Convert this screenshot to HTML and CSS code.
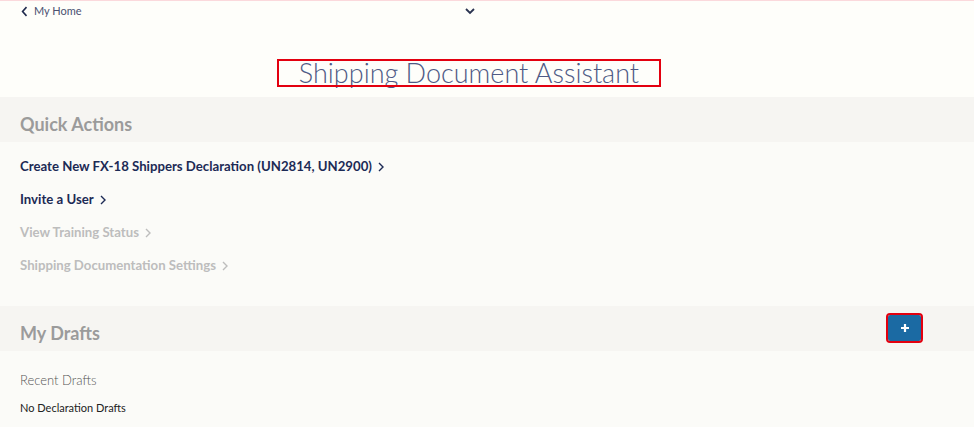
FILE: index.html
```html
<!DOCTYPE html>
<html lang="en">
<head>
<meta charset="utf-8">
<title>Shipping Document Assistant</title>
<link rel="stylesheet" href="styles.css">
</head>
<body>
<div class="page">
<header class="topbar">
  <a class="back" href="#">
    <svg class="back-icon" viewBox="0 0 8 12" width="7" height="11"><path d="M6.3 1 L1.8 6 L6.3 11" fill="none" stroke="#1f2a4d" stroke-width="1.8"/></svg>
    <span>My Home</span>
  </a>
  <div class="toggle">
    <svg viewBox="0 0 10 7" width="10" height="7"><path d="M1 1 L5 5 L9 1" fill="none" stroke="#2a3350" stroke-width="1.8"/></svg>
  </div>
</header>

<div class="title-wrap">
  <h1 class="title">Shipping Document Assistant</h1>
</div>

<section class="panel">
  <div class="band"><h2>Quick Actions</h2></div>
  <ul class="actions">
    <li><a class="action" href="#">Create New FX-18 Shippers Declaration (UN2814, UN2900)<svg class="chev" viewBox="0 0 6 10" width="6" height="10"><path d="M1 1 L5 5 L1 9" fill="none" stroke="currentColor" stroke-width="1.4"/></svg></a></li>
    <li><a class="action" href="#">Invite a User<svg class="chev" viewBox="0 0 6 10" width="6" height="10"><path d="M1 1 L5 5 L1 9" fill="none" stroke="currentColor" stroke-width="1.4"/></svg></a></li>
    <li><a class="action disabled" href="#">View Training Status<svg class="chev" viewBox="0 0 6 10" width="6" height="10"><path d="M1 1 L5 5 L1 9" fill="none" stroke="currentColor" stroke-width="1.4"/></svg></a></li>
    <li><a class="action disabled" href="#">Shipping Documentation Settings<svg class="chev" viewBox="0 0 6 10" width="6" height="10"><path d="M1 1 L5 5 L1 9" fill="none" stroke="currentColor" stroke-width="1.4"/></svg></a></li>
  </ul>
</section>

<section class="panel drafts">
  <div class="band band-row">
    <h2>My Drafts</h2>
    <button class="add-btn" type="button" aria-label="Add draft">
      <svg viewBox="0 0 10 10" width="10" height="10"><path d="M5 1 V9 M1 5 H9" stroke="#fff" stroke-width="2.2"/></svg>
    </button>
  </div>
  <div class="drafts-body">
    <h3 class="sub">Recent Drafts</h3>
    <p class="empty">No Declaration Drafts</p>
  </div>
</section>
</div>
</body>
</html>
```

FILE: styles.css
```css
* { box-sizing: border-box; }
html, body { margin: 0; padding: 0; }
body {
  background: #fefefa;
  font-family: Lato, "Open Sans", sans-serif;
  color: #222;
}
a { text-decoration: none; }

.page { border-top: 1px solid #fbd9dc; }

.topbar {
  height: 22px;
  display: grid;
  width: 938px;
}
.back {
  grid-area: 1 / 1;
  align-self: start;
  display: flex;
  align-items: center;
  gap: 6px;
  padding-left: 21px;
  padding-top: 4px;
  color: #4b5170;
  font-size: 11px;
  line-height: 12px;
}
.back-icon { display: block; }
.toggle {
  grid-area: 1 / 1;
  justify-self: center;
  padding-top: 7px;
}
.toggle svg { display: block; margin-left: 2px; }

.title-wrap {
  width: 938px;
  display: flex;
  justify-content: center;
  padding-top: 38px;
  padding-bottom: 12px;
}
.title {
  margin: 0;
  width: 380px;
  height: 24px;
  line-height: 24px;
  outline: 2px solid #e3000f;
  text-align: center;
  font-weight: 300;
  font-size: 27px;
  color: #4f5a85;
  white-space: nowrap;
}

.panel { background: #fbfbf8; }
.band {
  background: #f6f5f2;
  height: 45px;
  display: flex;
  align-items: center;
  padding: 9px 0 0 20px;
}
.band h2 {
  margin: 0;
  font-size: 18px;
  line-height: 22px;
  font-weight: 700;
  color: #9b9b9b;
}
.actions {
  list-style: none;
  margin: 0;
  padding: 13px 0 36px 20px;
  display: flex;
  flex-direction: column;
  gap: 17px;
}
.actions li { height: 16px; }
.action {
  font-size: 13.2px;
  font-weight: 700;
  color: #1c2a55;
  line-height: 16px;
  display: inline-flex;
  align-items: center;
  gap: 6px;
}
.action.disabled { color: #bdbdbd; }
.chev { display: block; margin-top: 1px; }

.band-row {
  justify-content: space-between;
  padding-right: 53px;
}
.add-btn {
  width: 33px;
  height: 26px;
  margin-top: -11px;
  border: 0;
  border-radius: 2px;
  background: #1b6aa3;
  outline: 2px solid #e3000f;
  display: flex;
  align-items: center;
  justify-content: center;
  padding: 0;
}
.add-btn svg { display: block; }
.drafts-body { padding: 21px 20px 12px; }
.sub {
  margin: 0 0 13px;
  font-size: 13px;
  line-height: 16px;
  font-weight: 300;
  color: #555;
}
.empty {
  margin: 0;
  font-size: 11px;
  line-height: 14px;
  color: #222;
}
```
